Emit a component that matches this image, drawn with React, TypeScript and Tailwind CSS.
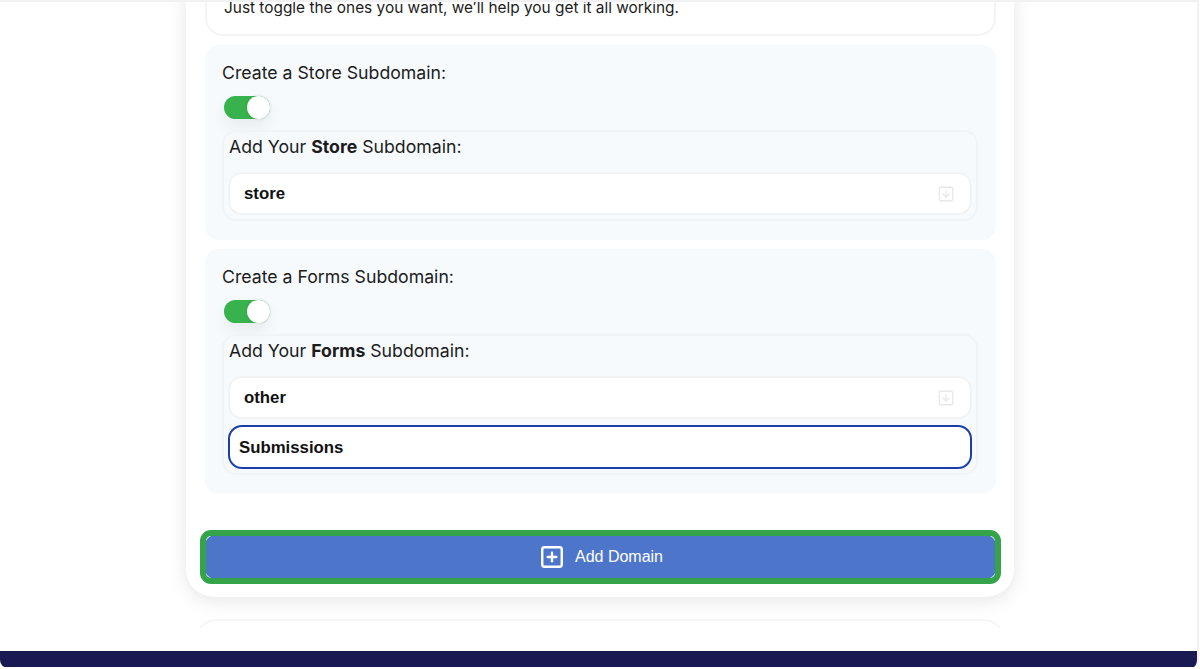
import { SquareArrowDown, SquarePlus } from 'lucide-react';

const textFont = "font-['Inter',sans-serif] text-[#1c1c1c]";
const labelFont = `${textFont} text-[17.7px]`;
const inputFont = "font-['Liberation_Sans',Arial,sans-serif] text-[16.8px] font-bold text-[#111]";

const Toggle = () => (
  <div className="flex h-[23px] w-[46px] justify-end rounded-full bg-[#37b24d] shadow-[0_8px_16px_rgba(0,0,0,0.06)]">
    <div className="h-[23px] w-[23px] rounded-full bg-white shadow-[0_0_3px_rgba(0,0,0,0.15)]" />
  </div>
);

const SavedInput = ({ value }: { value: string }) => (
  <div className={`flex h-[43px] items-center justify-between rounded-[14px] border-2 border-[#f1f3f5] bg-white pl-[14px] pr-[15px] ${inputFont}`}>
    <span>{value}</span>
    <SquareArrowDown className="h-[18px] w-[18px] text-[#e6e8ea]" strokeWidth={1.75} />
  </div>
);

const Section = ({ name, value, children }: { name: string; value: string; children?: React.ReactNode }) => (
  <section className="rounded-[14px] bg-[#f6fafd] pb-[19px] pl-[17px] pr-[18px] pt-[16px]">
    <p className={`leading-[24px] ${labelFont}`}>Create a {name} Subdomain:</p>
    <div className="mt-[11px] pl-[2px]">
      <Toggle />
    </div>
    <div className="mt-[11px] rounded-[14px] border-2 border-[#f1f4f7] px-[4px] pb-[4px]">
      <p className={`pb-[13px] pl-[1px] pt-[3px] leading-[24px] ${labelFont}`}>
        Add Your <b>{name}</b> Subdomain:
      </p>
      <div className="flex flex-col gap-[6px]">
        <SavedInput value={value} />
        {children}
      </div>
    </div>
  </section>
);

export default function App() {
  return (
    <div className="h-[669px] w-[1200px] overflow-hidden bg-white">
      <div className="flex h-[668px] w-[1199px] flex-col overflow-hidden rounded-b-[8px] border-r-2 border-t-2 border-[#f1f1f4]">
        <div className="flex h-[626px] flex-col items-center overflow-hidden pl-[3px]">
          <div className="-mt-[26px] flex w-[828px] shrink-0 flex-col gap-[9px] rounded-[28px] bg-white pb-[18px] pl-[19px] pr-[18px] shadow-[0_4px_20px_rgba(0,0,0,0.1)]">
            <div className="flex h-[60px] items-end rounded-[18px] border-2 border-[#f3f4f6] px-[17px] pb-[14px]">
              <p className={`text-[15.4px] leading-[24px] ${textFont}`}>Just toggle the ones you want, we’ll help you get it all working.</p>
            </div>
            <Section name="Store" value="store" />
            <Section name="Forms" value="other">
              <div className={`flex h-[44px] items-center rounded-[14px] border-2 border-[#1a3fa8] bg-white pl-[9px] pt-[1px] ${inputFont}`}>
                Submissions
              </div>
            </Section>
            <button className="relative mt-[32px] flex h-[44px] items-center justify-center gap-[10px] rounded-[10px] bg-[#4d76cb] pl-[1px] font-['Liberation_Sans',Arial,sans-serif] text-[16px] text-white">
              <SquarePlus className="h-[26px] w-[26px]" strokeWidth={2.2} />
              Add Domain
              <span className="absolute -inset-[5px] rounded-[11px] border-[6px] border-[#34a34a]" />
            </button>
          </div>
          <div className="mt-[22px] h-[60px] w-[810px] shrink-0 rounded-[22px] border-2 border-[#f5f5f7] bg-white" />
        </div>
        <div className="mt-[23px] h-[16px] bg-[#1a1a52]" />
      </div>
    </div>
  );
}
